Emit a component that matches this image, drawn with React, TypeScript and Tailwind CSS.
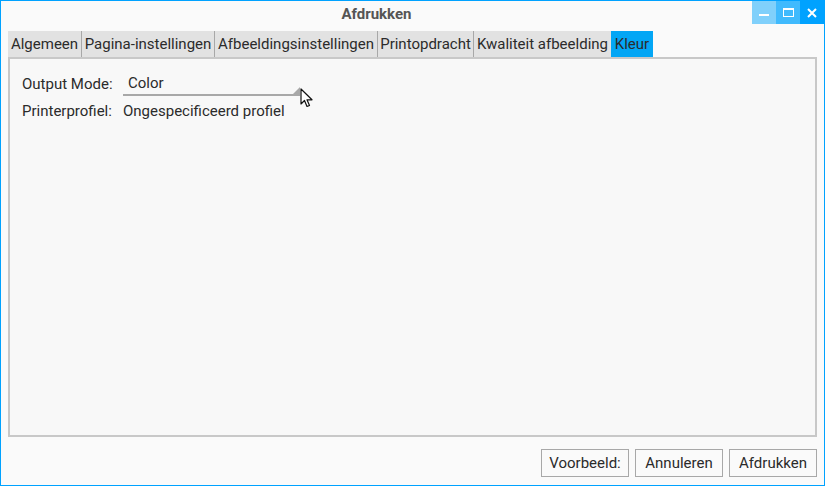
const tabs = [
  { label: "Algemeen", w: "w-[74px]" },
  { label: "Pagina-instellingen", w: "w-[133px]" },
  { label: "Afbeeldingsinstellingen", w: "w-[163px]" },
  { label: "Printopdracht", w: "w-[96px]" },
  { label: "Kwaliteit afbeelding", w: "w-[138px]" },
];

function Cursor() {
  return (
    <svg width="14" height="20" viewBox="0 0 14 20" className="absolute left-[299px] top-[87px]">
      <path
        d="M1 1 L1 16 L4.5 12.5 L7 18.5 L9.5 17.5 L7 11.8 L12 11.8 Z"
        fill="#fff"
        stroke="#111"
        strokeWidth="1.2"
        strokeLinejoin="round"
      />
    </svg>
  );
}

export default function App() {
  return (
    <div
      className="relative w-[825px] h-[486px] border border-[#00a2ff] bg-[#fafafa] flex flex-col text-[15px] text-[#2b2b2b]"
      style={{ fontFamily: "Roboto, 'Liberation Sans', sans-serif" }}
    >
      {/* title bar */}
      <div className="h-[30px] flex">
        <div className="flex-1 flex justify-center">
          <span className="mt-[2px] font-bold text-[#555]">Afdrukken</span>
        </div>
        <div className="flex h-[23px]">
          <div className="w-[24px] bg-[#80d0fb] flex items-center justify-center">
            <div className="w-[10px] h-[2px] bg-white mt-[5px]" />
          </div>
          <div className="w-[24px] bg-[#40bafd] flex items-center justify-center">
            <div className="w-[11px] h-[9px] border border-white border-t-2" />
          </div>
          <div className="w-[24px] bg-[#00a2ff] flex items-center justify-center">
            <svg width="10" height="10" viewBox="0 0 10 10">
              <path d="M1 1 L9 9 M9 1 L1 9" stroke="#fff" strokeWidth="2" />
            </svg>
          </div>
        </div>
      </div>

      {/* tabs */}
      <div className="flex h-[26px] ml-[7px]">
        {tabs.map((t) => (
          <div
            key={t.label}
            className={`${t.w} bg-[#e2e2e2] border-r border-[#a8a8a8] flex items-center justify-center whitespace-nowrap`}
          >
            {t.label}
          </div>
        ))}
        <div className="w-[42px] bg-[#03a6f5] flex items-center justify-center -ml-px">Kleur</div>
      </div>

      {/* panel */}
      <div className="mx-[7px] h-[380px] border-2 border-[#c8c8c8] bg-[#f8f8f8] pl-[12px] pt-[13px]">
        <div className="flex items-center h-[24px]">
          <span className="w-[101px]">Output Mode:</span>
          <div className="relative w-[177px] h-[24px] border-b-2 border-[#a8a8a8] pl-[5px]">
            Color
            <div className="absolute right-0 bottom-0 w-0 h-0 border-l-[7px] border-l-transparent border-b-[7px] border-b-[#a8a8a8]" />
          </div>
        </div>
        <div className="flex items-center h-[28px] mt-[1px]">
          <span className="w-[101px]">Printerprofiel:</span>
          <span>Ongespecificeerd profiel</span>
        </div>
      </div>

      {/* buttons */}
      <div className="flex justify-end gap-[6px] mr-[7px] mt-[12px]">
        {["Voorbeeld:", "Annuleren", "Afdrukken"].map((b) => (
          <button
            key={b}
            className="w-[88px] h-[28px] border border-[#a8a8a8] bg-[#fafafa] text-[#2b2b2b]"
          >
            {b}
          </button>
        ))}
      </div>

      <Cursor />
    </div>
  );
}
